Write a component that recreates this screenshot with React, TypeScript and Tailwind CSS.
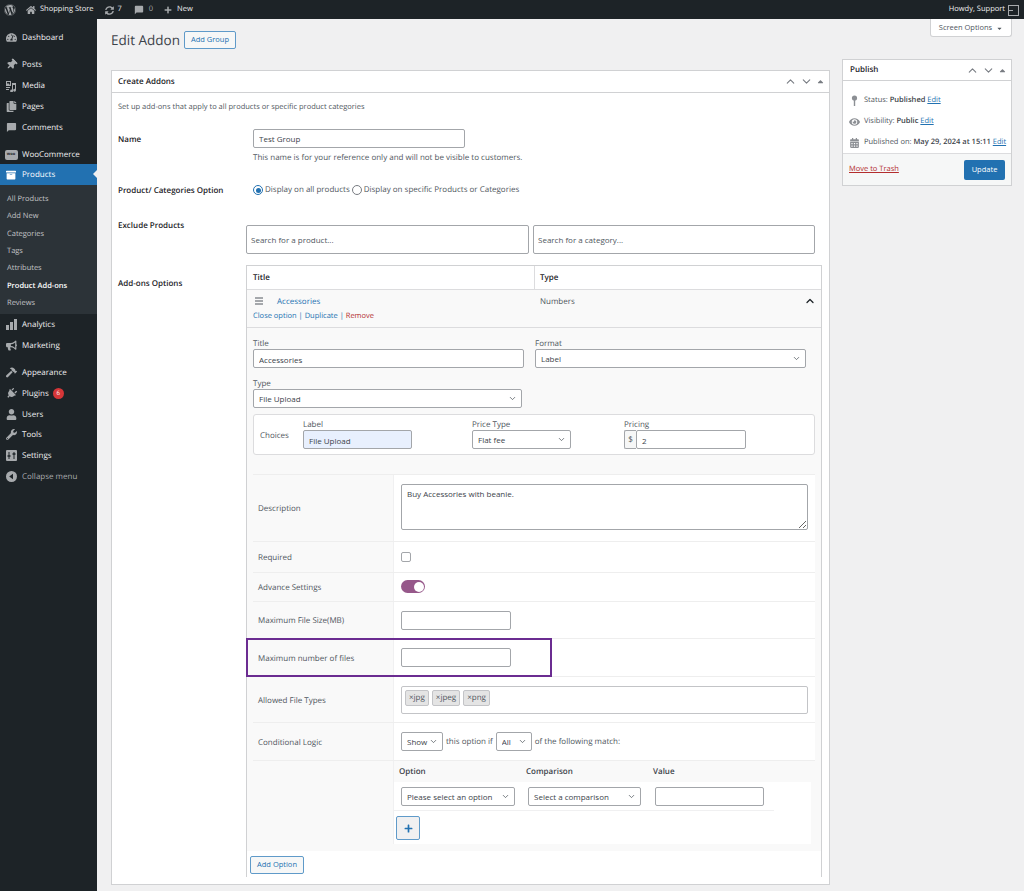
import type { ReactNode } from 'react'
import {
    FaWordpress, FaHome, FaPlus, FaTachometerAlt, FaThumbtack, FaCopy, FaArchive,
    FaBullhorn, FaHammer, FaPlug, FaUser, FaWrench, FaEye, FaCalendarAlt, FaSyncAlt,
    FaCaretUp, FaCaretDown,
} from 'react-icons/fa'
import { MdChatBubble } from 'react-icons/md'
import { ChevronUp, ChevronDown } from 'lucide-react'

const inputCls = 'h-[19px] rounded-[2px] border border-[#a3a6aa] px-[5px] pt-[1px] text-[8px] text-[#3c434a] outline-none'

function WooIcon() {
    return (
        <span className="flex h-[10px] w-[13px] items-center justify-center rounded-[2px] bg-[#a7aaad] text-[4px] font-bold text-[#1d2327]">woo</span>
    )
}

function MediaIcon() {
    return (
        <svg width="12" height="12" viewBox="0 0 12 12" fill="#a7aaad">
            <path d="M1 1h5v5H1zM2 2v2l1-1 2 2V2z" fillRule="evenodd" />
            <path d="M7 3h4v7.2a1.4 1.4 0 1 1-1-1.3V5H8v6a1.4 1.4 0 1 1-1-1.3z" />
            <path d="M1 7h4v1H1zM1 9h3v1H1z" />
        </svg>
    )
}

function BarsIcon() {
    return (
        <span className="flex h-[11px] w-[11px] items-end gap-[1px]">
            <span className="h-[5px] w-[3px] bg-[#a7aaad]" />
            <span className="h-[8px] w-[3px] bg-[#a7aaad]" />
            <span className="h-[11px] w-[3px] bg-[#a7aaad]" />
        </span>
    )
}

function SettingsIcon() {
    return (
        <svg width="11" height="11" viewBox="0 0 11 11">
            <rect width="11" height="11" rx="1" fill="#a7aaad" />
            <path d="M3 2v7M8 2v7" stroke="#1d2327" strokeWidth="1" />
            <path d="M1.5 6h3M6.5 4h3" stroke="#1d2327" strokeWidth="1.4" />
        </svg>
    )
}

function CollapseIcon() {
    return (
        <svg width="11" height="11" viewBox="0 0 11 11">
            <circle cx="5.5" cy="5.5" r="5.5" fill="#a7aaad" />
            <path d="M7 2.8v5.4L3.2 5.5z" fill="#1d2327" />
        </svg>
    )
}

function PinIcon() {
    return (
        <svg width="11" height="11" viewBox="0 0 11 11" fill="#8c8f94">
            <circle cx="5.5" cy="3" r="2.6" />
            <rect x="4.8" y="5" width="1.4" height="6" />
        </svg>
    )
}

function MenuItem({ icon, label, gap, badge, muted, tight }: { icon: ReactNode; label: string; gap?: boolean; badge?: string; muted?: boolean; tight?: boolean }) {
    return (
        <div className={`flex h-[21px] items-center text-[8px] ${muted ? 'text-[#a7aaad]' : 'text-[#f0f0f1]'} ${gap ? 'mt-[6px]' : ''} ${tight ? '-mt-[1px]' : ''}`}>
            <span className="flex w-[22px] shrink-0 items-center justify-center text-[11px] text-[#a7aaad]">{icon}</span>
            <span>{label}</span>
            {badge && (
                <span className="ml-[4px] flex h-[11px] w-[11px] items-center justify-center rounded-full bg-[#d63638] text-[6px] text-white">{badge}</span>
            )}
        </div>
    )
}

function Sidebar() {
    const subItems = ['All Products', 'Add New', 'Categories', 'Tags', 'Attributes', 'Product Add-ons', 'Reviews']
    return (
        <aside className="w-[97px] shrink-0 bg-[#1d2327] pt-[8px]">
            <MenuItem icon={<FaTachometerAlt />} label="Dashboard" />
            <MenuItem gap icon={<FaThumbtack className="rotate-45" />} label="Posts" />
            <MenuItem icon={<MediaIcon />} label="Media" />
            <MenuItem icon={<FaCopy />} label="Pages" />
            <MenuItem icon={<MdChatBubble />} label="Comments" />
            <MenuItem gap icon={<WooIcon />} label="WooCommerce" />
            <div className="relative -mt-[1px] flex h-[21px] items-center bg-[#2271b1] pt-[1px] text-[8px] text-white">
                <span className="flex w-[22px] items-center justify-center text-[10px]"><FaArchive /></span>
                Products
                <span className="absolute right-0 top-[6px] h-0 w-0 border-y-[4px] border-r-[4px] border-y-transparent border-r-[#f0f0f1]" />
            </div>
            <div className="bg-[#2c3338] pb-[3px] pt-[5px]">
                {subItems.map((s) => (
                    <div key={s} className={`flex h-[17.3px] items-center pl-[7px] pt-[2px] text-[7.5px] ${s === 'Product Add-ons' ? 'font-semibold text-white' : 'text-[#c3c4c7]'}`}>{s}</div>
                ))}
            </div>
            <MenuItem icon={<BarsIcon />} label="Analytics" />
            <MenuItem icon={<FaBullhorn />} label="Marketing" />
            <MenuItem gap icon={<FaHammer />} label="Appearance" />
            <MenuItem icon={<FaPlug className="rotate-45" />} label="Plugins" badge="6" />
            <MenuItem icon={<FaUser />} label="Users" />
            <MenuItem tight icon={<FaWrench />} label="Tools" />
            <MenuItem icon={<SettingsIcon />} label="Settings" />
            <MenuItem muted icon={<CollapseIcon />} label="Collapse menu" />
        </aside>
    )
}

function AdminBar() {
    return (
        <header className="flex h-[19px] items-center bg-[#1d2327] pt-[1px] text-[7.5px] text-[#f0f0f1]">
            <FaWordpress className="ml-[4px] text-[12px] text-[#a7aaad]" />
            <FaHome className="ml-[10px] text-[10px] text-[#a7aaad]" />
            <span className="ml-[4px]">Shopping Store</span>
            <FaSyncAlt className="ml-[11px] text-[9px] text-[#a7aaad]" />
            <span className="ml-[4px]">7</span>
            <MdChatBubble className="ml-[12px] text-[10px] text-[#a7aaad]" />
            <span className="ml-[5px] text-[#a7aaad]">0</span>
            <FaPlus className="ml-[11px] text-[8px] text-[#a7aaad]" />
            <span className="ml-[5px]">New</span>
            <span className="ml-auto">Howdy, Support</span>
            <span className="ml-[3px] mr-[5px] flex h-[11px] w-[11px] flex-col justify-center border border-[#a7aaad]">
                <span className="h-[1px] w-[4px] bg-[#a7aaad]" />
            </span>
        </header>
    )
}

function Select({ value, className }: { value: string; className: string }) {
    return (
        <div className={`relative ${className}`}>
            <select defaultValue={value} className={`${inputCls} w-full appearance-none bg-white pr-[10px]`}>
                <option>{value}</option>
            </select>
            <ChevronDown size={9} strokeWidth={2} className="pointer-events-none absolute right-[5px] top-[5px] text-[#50575e]" />
        </div>
    )
}

function Row({ label, h, children }: { label?: string; h: string; children?: ReactNode }) {
    return (
        <div className={`flex border-b border-[#eeeeee] ${h}`}>
            <div className="flex w-[140px] shrink-0 items-center bg-[#f9f9f9] pl-[5px] pt-[2px] text-[8px] text-[#50575e]">{label}</div>
            <div className="flex flex-1 items-center border-l border-[#f0f0f1] bg-white pl-[7px]">{children}</div>
        </div>
    )
}

function BoxControls() {
    return (
        <div className="flex items-center gap-[3px] text-[#787c82]">
            <ChevronUp size={13} strokeWidth={2} />
            <ChevronDown size={13} strokeWidth={2} />
            <FaCaretUp className="text-[9px]" />
        </div>
    )
}

function AddonEditor() {
    return (
        <div className="border-t border-[#dcdcde] bg-[#f9f9f9] px-[6px] pb-[7px] pt-[8px] text-[8px] text-[#50575e]">
            <div className="flex">
                <label className="flex w-[282px] flex-col">
                    <span className="h-[13px] pt-[1px] leading-[13px]">Title</span>
                    <input className={`${inputCls} w-[271px] bg-white`} defaultValue="Accessories" />
                </label>
                <label className="flex flex-col">
                    <span className="h-[13px] pt-[1px] leading-[13px]">Format</span>
                    <Select value="Label" className="w-[271px]" />
                </label>
            </div>
            <div className="mt-[8px] h-[13px] pt-[1px] leading-[13px]">Type</div>
            <Select value="File Upload" className="w-[269px]" />
            <div className="mt-[6px] flex h-[41px] w-[562px] items-center rounded-[3px] border border-[#dcdcde] bg-white pb-[1px]">
                <span className="w-[49px] pl-[6px] pt-[3px] text-[#50575e]">Choices</span>
                <label className="flex w-[169px] flex-col">
                    <span className="h-[11px] leading-[11px]">Label</span>
                    <input className={`${inputCls} w-[109px] bg-[#e8f0fe]`} defaultValue="File Upload" />
                </label>
                <label className="flex w-[152px] flex-col">
                    <span className="h-[11px] leading-[11px]">Price Type</span>
                    <Select value="Flat fee" className="w-[99px]" />
                </label>
                <label className="flex flex-col">
                    <span className="h-[11px] leading-[11px]">Pricing</span>
                    <span className="flex">
                        <span className="flex h-[19px] w-[12px] items-center justify-center rounded-l-[2px] border border-r-0 border-[#a3a6aa] bg-[#f6f7f7]">$</span>
                        <input className={`${inputCls} w-[110px] bg-white`} defaultValue="2" />
                    </span>
                </label>
            </div>

            <div className="mt-[19px] border-t border-[#eeeeee]">
                <Row label="Description" h="h-[67px]">
                    <textarea className="-mt-[2px] h-[46px] w-[407px] rounded-[2px] border border-[#a3a6aa] bg-white px-[5px] py-[3px] text-[8px] text-[#3c434a] outline-none" defaultValue="Buy Accessories with beanie." />
                </Row>
                <Row label="Required" h="h-[31px]">
                    <span className="h-[10px] w-[10px] rounded-[2px] border border-[#a3a6aa] bg-white" />
                </Row>
                <Row label="Advance Settings" h="h-[29px]">
                    <span className="-mt-[1px] flex h-[13px] w-[24px] items-center justify-end rounded-full bg-[#96588a] pr-[1px]">
                        <span className="h-[10px] w-[10px] rounded-full bg-white" />
                    </span>
                </Row>
                <Row label="Maximum File Size(MB)" h="h-[37px]">
                    <input className={`${inputCls} w-[110px] bg-white`} />
                </Row>
                <div className="relative">
                    <Row label="Maximum number of files" h="h-[38px]">
                        <input className={`${inputCls} w-[110px] bg-white`} />
                    </Row>
                    <div className="pointer-events-none absolute -left-[7px] -top-[1px] h-[39px] w-[306px] border-2 border-[#6b2c91]" />
                </div>
                <Row label="Allowed File Types" h="h-[46px]">
                    <div className="flex h-[28px] w-[407px] items-start gap-[3px] rounded-[2px] border border-[#c3c4c7] px-[3px] pt-[3px]">
                        {['jpg', 'jpeg', 'png'].map((t) => (
                            <span key={t} className="flex h-[16px] items-center rounded-[2px] border border-[#c3c4c7] bg-[#e4e4e4] px-[3px] text-[8px] text-[#50575e]">×{t}</span>
                        ))}
                    </div>
                </Row>
                <Row label="Conditional Logic" h="h-[38px]">
                    <Select value="Show" className="w-[42px]" />
                    <span className="mx-[3px]">this option if</span>
                    <Select value="All" className="w-[36px]" />
                    <span className="ml-[3px]">of the following match:</span>
                </Row>
                <div className="flex">
                    <div className="w-[140px] shrink-0" />
                    <div className="w-[418px] border-l border-[#f0f0f1] bg-white pb-[4px]">
                        <div className="flex h-[21px] items-center bg-[#f9f9f9] pl-[5px] font-semibold text-[#3c434a]">
                            <span className="w-[127px]">Option</span>
                            <span className="w-[127px]">Comparison</span>
                            <span>Value</span>
                        </div>
                        <div className="flex h-[29px] w-[380px] items-center border-b border-[#f0f0f1] pl-[7px]">
                            <Select value="Please select an option" className="w-[114px]" />
                            <Select value="Select a comparison" className="ml-[13px] w-[113px]" />
                            <input className={`${inputCls} ml-[14px] w-[109px] bg-white`} />
                        </div>
                        <button className="ml-[2px] mt-[5px] flex h-[24px] w-[24px] items-center justify-center rounded-[2px] border border-[#5f9ac9] bg-[#f0f0f1] text-[9px] text-[#2271b1]">
                            <FaPlus />
                        </button>
                    </div>
                </div>
            </div>
        </div>
    )
}

function CreateAddons() {
    return (
        <section className="h-[815px] w-[719px] border border-[#d0d1d3] bg-white">
            <div className="flex h-[22px] items-center justify-between border-b border-[#d0d1d3] pl-[6px] pr-[4px] text-[8px] font-semibold text-[#1d2327]">
                Create Addons
                <BoxControls />
            </div>
            <p className="mt-[8px] pl-[6px] text-[7.5px] leading-[12px] text-[#50575e]">Set up add-ons that apply to all products or specific product categories</p>
            <div className="flex">
                <div className="w-[134px] pl-[6px] text-[8px] font-semibold text-[#1d2327]">
                    <div className="mt-[21px] leading-[12px]">Name</div>
                    <div className="mt-[39px] leading-[12px]">Product/ Categories Option</div>
                    <div className="mt-[23px] leading-[12px]">Exclude Products</div>
                    <div className="mt-[46px] leading-[12px]">Add-ons Options</div>
                </div>
                <div className="flex-1">
                    <div className="mt-[11px] pl-[7px]">
                        <input className={`${inputCls} w-[212px] bg-white`} defaultValue="Test Group" />
                        <p className="mt-[4px] text-[8px] leading-[12px] text-[#50575e]">This name is for your reference only and will not be visible to customers.</p>
                    </div>
                    <div className="mt-[20px] flex h-[12px] items-center pl-[7px] text-[8px] text-[#50575e]">
                        <span className="mr-[2px] flex h-[10px] w-[10px] items-center justify-center rounded-full border border-[#2271b1] bg-white">
                            <span className="h-[5px] w-[5px] rounded-full bg-[#2271b1]" />
                        </span>
                        <span>Display on all products</span>
                        <span className="mx-[2px] h-[10px] w-[10px] rounded-full border border-[#787c82] bg-white" />
                        <span>Display on specific Products or Categories</span>
                    </div>
                    <div className="mt-[29px] flex gap-[4px]">
                        <input className="h-[29px] w-[283px] rounded-[2px] border border-[#a3a6aa] px-[4px] text-[8px] placeholder:text-[#50575e]" placeholder="Search for a product..." />
                        <input className="h-[29px] w-[282px] rounded-[2px] border border-[#a3a6aa] px-[4px] text-[8px] placeholder:text-[#50575e]" placeholder="Search for a category..." />
                    </div>
                    <div className="mt-[11px] h-[612px] w-[576px] border border-[#d0d1d3]">
                        <div className="flex h-[23px] items-center text-[8px] font-semibold text-[#1d2327]">
                            <span className="flex h-full w-[288px] items-center border-r border-[#dcdcde] pl-[6px] pt-[1px]">Title</span>
                            <span className="pl-[5px] pt-[1px]">Type</span>
                        </div>
                        <div className="flex h-[38px] border-t border-[#dcdcde] bg-[#f9f9f9] text-[8px]">
                            <div className="w-[288px] pl-[6px] pt-[5px]">
                                <div className="flex h-[12px] items-center">
                                    <svg width="11" height="8" viewBox="0 0 11 8" className="ml-[1px]"><path d="M1 1h8M1 4h8M1 7h8" stroke="#50575e" strokeWidth="1" /></svg>
                                    <span className="ml-[12px] pt-[1px] text-[#2271b1]">Accessories</span>
                                </div>
                                <div className="mt-[3px] text-[7.5px] leading-[12px] text-[#2271b1]">Close option | Duplicate | <span className="text-[#b32d2e]">Remove</span></div>
                            </div>
                            <div className="flex flex-1 items-start justify-between pl-[5px] pr-[5px] pt-[5px] text-[#50575e]">
                                <span className="pt-[1px]">Numbers</span>
                                <ChevronUp size={12} strokeWidth={2.5} className="text-[#1d2327]" />
                            </div>
                        </div>
                        <AddonEditor />
                        <div className="flex h-[28px] items-center bg-white pl-[3px]">
                            <button className="flex h-[18px] w-[54px] items-center justify-center rounded-[2px] border border-[#5f9ac9] bg-[#f6f7f7] text-[7.5px] text-[#2271b1]">Add Option</button>
                        </div>
                    </div>
                </div>
            </div>
        </section>
    )
}

function PublishBox() {
    return (
        <section className="w-[170px] border border-[#d0d1d3] bg-white text-[7.5px] text-[#50575e]">
            <div className="flex h-[21px] items-center justify-between border-b border-[#d0d1d3] pl-[7px] pr-[4px] text-[8px] font-semibold text-[#1d2327]">
                Publish
                <BoxControls />
            </div>
            <div className="pl-[6px] pt-[9px]">
                <div className="flex h-[21px] items-center whitespace-nowrap"><PinIcon /><span className="ml-[4px]">Status: <b className="font-semibold text-[#3c434a]">Published</b> <a className="text-[#2271b1] underline">Edit</a></span></div>
                <div className="flex h-[21px] items-center whitespace-nowrap"><FaEye className="w-[11px] text-[10px] text-[#8c8f94]" /><span className="ml-[4px]">Visibility: <b className="font-semibold text-[#3c434a]">Public</b> <a className="text-[#2271b1] underline">Edit</a></span></div>
                <div className="flex h-[21px] items-center whitespace-nowrap"><FaCalendarAlt className="w-[11px] text-[10px] text-[#8c8f94]" /><span className="ml-[4px]">Published on: <b className="font-semibold text-[#3c434a]">May 29, 2024 at 15:11</b> <a className="text-[#2271b1] underline">Edit</a></span></div>
            </div>
            <div className="flex h-[32px] items-center justify-between border-t border-[#dcdcde] bg-[#f6f7f7] pl-[6px] pr-[6px]">
                <a className="text-[#b32d2e] underline">Move to Trash</a>
                <button className="flex h-[20px] w-[41px] items-center justify-center rounded-[2px] bg-[#2271b1] text-white">Update</button>
            </div>
        </section>
    )
}

export default function App() {
    return (
        <div className="flex h-[891px] flex-col overflow-hidden bg-[#f0f0f1] font-['Open_Sans',sans-serif] [text-rendering:geometricPrecision]">
            <AdminBar />
            <div className="flex flex-1">
                <Sidebar />
                <main className="flex gap-[12px] pl-[14px]">
                    <div>
                        <div className="flex h-[51px] items-start pt-[12px]">
                            <h1 className="text-[13.5px] leading-[18px] text-[#3c434a]">Edit Addon</h1>
                            <button className="ml-[4px] flex h-[18px] w-[52px] items-center justify-center rounded-[2px] border border-[#5f9ac9] bg-[#f6f7f7] text-[7.5px] text-[#2271b1]">Add Group</button>
                        </div>
                        <CreateAddons />
                    </div>
                    <div className="flex flex-col items-end">
                        <button className="flex h-[18px] w-[82px] items-center justify-center gap-[4px] rounded-b-[3px] border border-t-0 border-[#d0d1d3] bg-white pt-[1px] text-[7.5px] text-[#50575e]">
                            Screen Options <FaCaretDown className="text-[7px]" />
                        </button>
                        <div className="mt-[22px]"><PublishBox /></div>
                    </div>
                </main>
            </div>
        </div>
    )
}
